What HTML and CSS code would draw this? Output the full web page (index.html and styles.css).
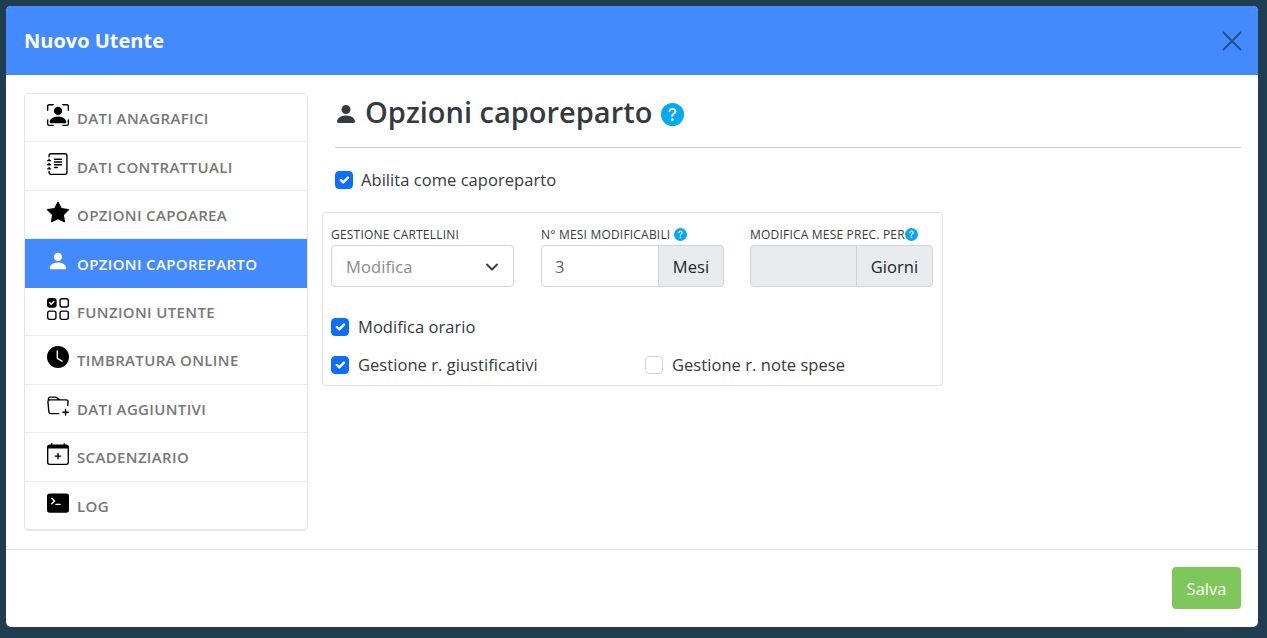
FILE: index.html
```html
<!DOCTYPE html>
<html lang="it">
<head>
<meta charset="utf-8">
<title>Nuovo Utente</title>
<link rel="stylesheet" href="styles.css">
</head>
<body>
<div class="modal">
  <header class="modal-header">
    <h1 class="modal-title">Nuovo Utente</h1>
    <button class="close" aria-label="Chiudi"><svg viewBox="0 0 20 20" width="20" height="20"><path d="M1 1 19 19M19 1 1 19"/></svg></button>
  </header>
  <div class="modal-body">
    <nav class="side">
      <a class="side-item"><svg class="ico" viewBox="0 0 16 16"><path d="M1.5 1a.5.5 0 0 0-.5.5v3a.5.5 0 0 1-1 0v-3A1.5 1.5 0 0 1 1.5 0h3a.5.5 0 0 1 0 1h-3zM11 .5a.5.5 0 0 1 .5-.5h3A1.5 1.5 0 0 1 16 1.5v3a.5.5 0 0 1-1 0v-3a.5.5 0 0 0-.5-.5h-3a.5.5 0 0 1-.5-.5zM.5 11a.5.5 0 0 1 .5.5v3a.5.5 0 0 0 .5.5h3a.5.5 0 0 1 0 1h-3A1.5 1.5 0 0 1 0 14.5v-3a.5.5 0 0 1 .5-.5zm15 0a.5.5 0 0 1 .5.5v3a1.5 1.5 0 0 1-1.5 1.5h-3a.5.5 0 0 1 0-1h3a.5.5 0 0 0 .5-.5v-3a.5.5 0 0 1 .5-.5z"/><path d="M3 14s-1 0-1-1 1-4 6-4 6 3 6 4-1 1-1 1H3zm8-9a3 3 0 1 1-6 0 3 3 0 0 1 6 0z"/></svg><span>DATI ANAGRAFICI</span></a>
      <a class="side-item"><svg class="ico" viewBox="0 0 16 16"><path d="M5 10.5a.5.5 0 0 1 .5-.5h2a.5.5 0 0 1 0 1h-2a.5.5 0 0 1-.5-.5zm0-2a.5.5 0 0 1 .5-.5h5a.5.5 0 0 1 0 1h-5a.5.5 0 0 1-.5-.5zm0-2a.5.5 0 0 1 .5-.5h5a.5.5 0 0 1 0 1h-5a.5.5 0 0 1-.5-.5zm0-2a.5.5 0 0 1 .5-.5h5a.5.5 0 0 1 0 1h-5a.5.5 0 0 1-.5-.5z"/><path d="M3 0h10a2 2 0 0 1 2 2v12a2 2 0 0 1-2 2H3a2 2 0 0 1-2-2v-1h1v1a1 1 0 0 0 1 1h10a1 1 0 0 0 1-1V2a1 1 0 0 0-1-1H3a1 1 0 0 0-1 1v1H1V2a2 2 0 0 1 2-2z"/><path d="M1 5v-.5a.5.5 0 0 1 1 0V5h.5a.5.5 0 0 1 0 1h-2a.5.5 0 0 1 0-1H1zm0 3v-.5a.5.5 0 0 1 1 0V8h.5a.5.5 0 0 1 0 1h-2a.5.5 0 0 1 0-1H1zm0 3v-.5a.5.5 0 0 1 1 0v.5h.5a.5.5 0 0 1 0 1h-2a.5.5 0 0 1 0-1H1z"/></svg><span>DATI CONTRATTUALI</span></a>
      <a class="side-item"><svg class="ico" viewBox="0 0 16 16"><path d="M3.612 15.443c-.386.198-.824-.149-.746-.592l.83-4.73L.173 6.765c-.329-.314-.158-.888.283-.95l4.898-.696L7.538.792c.197-.39.73-.39.927 0l2.184 4.327 4.898.696c.441.062.612.636.282.95l-3.522 3.356.83 4.73c.078.443-.36.79-.746.592L8 13.187l-4.389 2.256z"/></svg><span>OPZIONI CAPOAREA</span></a>
      <a class="side-item active"><svg class="ico" viewBox="0 0 16 16"><path d="M3 14s-1 0-1-1 1-4 6-4 6 3 6 4-1 1-1 1H3zm5-6a3 3 0 1 0 0-6 3 3 0 0 0 0 6z"/></svg><span>OPZIONI CAPOREPARTO</span></a>
      <a class="side-item"><svg class="ico" viewBox="0 0 16 16"><path d="M2 10h3a1 1 0 0 1 1 1v3a1 1 0 0 1-1 1H2a1 1 0 0 1-1-1v-3a1 1 0 0 1 1-1zm9-9h3a1 1 0 0 1 1 1v3a1 1 0 0 1-1 1h-3a1 1 0 0 1-1-1V2a1 1 0 0 1 1-1zm0 9a1 1 0 0 0-1 1v3a1 1 0 0 0 1 1h3a1 1 0 0 0 1-1v-3a1 1 0 0 0-1-1h-3zm0-10a2 2 0 0 0-2 2v3a2 2 0 0 0 2 2h3a2 2 0 0 0 2-2V2a2 2 0 0 0-2-2h-3zM2 9a2 2 0 0 0-2 2v3a2 2 0 0 0 2 2h3a2 2 0 0 0 2-2v-3a2 2 0 0 0-2-2H2zm7 2a2 2 0 0 1 2-2h3a2 2 0 0 1 2 2v3a2 2 0 0 1-2 2h-3a2 2 0 0 1-2-2v-3zM0 2a2 2 0 0 1 2-2h3a2 2 0 0 1 2 2v3a2 2 0 0 1-2 2H2a2 2 0 0 1-2-2V2zm5.354.854a.5.5 0 1 0-.708-.708L3 3.793l-.646-.647a.5.5 0 1 0-.708.708l1 1a.5.5 0 0 0 .708 0l2-2z"/></svg><span>FUNZIONI UTENTE</span></a>
      <a class="side-item"><svg class="ico" viewBox="0 0 16 16"><path d="M16 8A8 8 0 1 1 0 8a8 8 0 0 1 16 0zM8 3.5a.5.5 0 0 0-1 0V9a.5.5 0 0 0 .252.434l3.5 2a.5.5 0 0 0 .496-.868L8 8.71V3.5z"/></svg><span>TIMBRATURA ONLINE</span></a>
      <a class="side-item"><svg class="ico" viewBox="0 0 16 16"><path d="m.5 3 .04.87a1.99 1.99 0 0 0-.342 1.311l.637 7A2 2 0 0 0 2.826 14H9v-1H2.826a1 1 0 0 1-.995-.91l-.637-7A1 1 0 0 1 2.19 4h11.62a1 1 0 0 1 .996 1.09L14.54 8h1.005l.256-2.819A2 2 0 0 0 13.81 3H9.828a2 2 0 0 1-1.414-.586l-.828-.828A2 2 0 0 0 6.172 1H2.5a2 2 0 0 0-2 2zm5.672-1a1 1 0 0 1 .707.293L7.586 3H2.19c-.24 0-.47.042-.683.12L1.5 2.98a1 1 0 0 1 1-.98h3.672z"/><path d="M13.5 10a.5.5 0 0 1 .5.5V12h1.5a.5.5 0 1 1 0 1H14v1.5a.5.5 0 1 1-1 0V13h-1.5a.5.5 0 0 1 0-1H13v-1.5a.5.5 0 0 1 .5-.5z"/></svg><span>DATI AGGIUNTIVI</span></a>
      <a class="side-item"><svg class="ico" viewBox="0 0 16 16"><path d="M8 7a.5.5 0 0 1 .5.5V9H10a.5.5 0 0 1 0 1H8.5v1.5a.5.5 0 0 1-1 0V10H6a.5.5 0 0 1 0-1h1.5V7.5A.5.5 0 0 1 8 7z"/><path d="M3.5 0a.5.5 0 0 1 .5.5V1h8V.5a.5.5 0 0 1 1 0V1h1a2 2 0 0 1 2 2v11a2 2 0 0 1-2 2H2a2 2 0 0 1-2-2V3a2 2 0 0 1 2-2h1V.5a.5.5 0 0 1 .5-.5zM1 4v10a1 1 0 0 0 1 1h12a1 1 0 0 0 1-1V4H1z"/></svg><span>SCADENZIARIO</span></a>
      <a class="side-item"><svg class="ico" viewBox="0 0 16 16"><path d="M0 3a2 2 0 0 1 2-2h12a2 2 0 0 1 2 2v10a2 2 0 0 1-2 2H2a2 2 0 0 1-2-2V3zm9.5 5.5h-3a.5.5 0 0 0 0 1h3a.5.5 0 0 0 0-1zm-6.354-.354a.5.5 0 1 0 .708.708l2-2a.5.5 0 0 0 0-.708l-2-2a.5.5 0 1 0-.708.708L4.793 6.5 3.146 8.146z"/></svg><span>LOG</span></a>
    </nav>
    <main class="content">
      <div class="head">
        <h2 class="head-title"><svg class="head-ico" viewBox="0 0 16 16"><path d="M3 14s-1 0-1-1 1-4 6-4 6 3 6 4-1 1-1 1H3zm5-6a3 3 0 1 0 0-6 3 3 0 0 0 0 6z"/></svg><span>Opzioni caporeparto</span><svg class="help help-lg" viewBox="0 0 16 16"><path d="M16 8A8 8 0 1 1 0 8a8 8 0 0 1 16 0zM5.496 6.033h.825c.138 0 .248-.113.266-.25.09-.656.54-1.134 1.342-1.134.686 0 1.314.343 1.314 1.168 0 .635-.374.927-.965 1.371-.673.489-1.206 1.06-1.168 1.987l.003.217a.25.25 0 0 0 .25.246h.811a.25.25 0 0 0 .25-.25v-.105c0-.718.273-.927 1.01-1.486.609-.463 1.244-.977 1.244-2.056 0-1.511-1.276-2.241-2.673-2.241-1.267 0-2.655.59-2.75 2.286a.237.237 0 0 0 .241.247zm2.325 6.443c.61 0 1.029-.394 1.029-.927 0-.552-.42-.94-1.029-.94-.584 0-1.009.388-1.009.94 0 .533.425.927 1.01.927z"/></svg></h2>
      </div>
      <label class="check top-check"><span class="box on"><svg viewBox="0 0 20 20"><path d="m6 10 3 3 6-6"/></svg></span>Abilita come caporeparto</label>
      <section class="panel">
        <div class="fields">
          <div class="field f1">
            <div class="lbl">GESTIONE CARTELLINI</div>
            <div class="select"><span>Modifica</span><svg viewBox="0 0 16 16" width="16" height="16"><path d="m3 5.5 5 5 5-5"/></svg></div>
          </div>
          <div class="field f2">
            <div class="lbl">N° MESI MODIFICABILI <svg class="help" viewBox="0 0 16 16"><path d="M16 8A8 8 0 1 1 0 8a8 8 0 0 1 16 0zM5.496 6.033h.825c.138 0 .248-.113.266-.25.09-.656.54-1.134 1.342-1.134.686 0 1.314.343 1.314 1.168 0 .635-.374.927-.965 1.371-.673.489-1.206 1.06-1.168 1.987l.003.217a.25.25 0 0 0 .25.246h.811a.25.25 0 0 0 .25-.25v-.105c0-.718.273-.927 1.01-1.486.609-.463 1.244-.977 1.244-2.056 0-1.511-1.276-2.241-2.673-2.241-1.267 0-2.655.59-2.75 2.286a.237.237 0 0 0 .241.247zm2.325 6.443c.61 0 1.029-.394 1.029-.927 0-.552-.42-.94-1.029-.94-.584 0-1.009.388-1.009.94 0 .533.425.927 1.01.927z"/></svg></div>
            <div class="group"><div class="input">3</div><div class="addon">Mesi</div></div>
          </div>
          <div class="field f3">
            <div class="lbl">MODIFICA MESE PREC. PER<svg class="help" viewBox="0 0 16 16"><path d="M16 8A8 8 0 1 1 0 8a8 8 0 0 1 16 0zM5.496 6.033h.825c.138 0 .248-.113.266-.25.09-.656.54-1.134 1.342-1.134.686 0 1.314.343 1.314 1.168 0 .635-.374.927-.965 1.371-.673.489-1.206 1.06-1.168 1.987l.003.217a.25.25 0 0 0 .25.246h.811a.25.25 0 0 0 .25-.25v-.105c0-.718.273-.927 1.01-1.486.609-.463 1.244-.977 1.244-2.056 0-1.511-1.276-2.241-2.673-2.241-1.267 0-2.655.59-2.75 2.286a.237.237 0 0 0 .241.247zm2.325 6.443c.61 0 1.029-.394 1.029-.927 0-.552-.42-.94-1.029-.94-.584 0-1.009.388-1.009.94 0 .533.425.927 1.01.927z"/></svg></div>
            <div class="group"><div class="input disabled"></div><div class="addon">Giorni</div></div>
          </div>
        </div>
        <label class="check row-a"><span class="box on"><svg viewBox="0 0 20 20"><path d="m6 10 3 3 6-6"/></svg></span>Modifica orario</label>
        <div class="row-b">
          <label class="check col-a"><span class="box on"><svg viewBox="0 0 20 20"><path d="m6 10 3 3 6-6"/></svg></span>Gestione r. giustificativi</label>
          <label class="check"><span class="box"></span>Gestione r. note spese</label>
        </div>
      </section>
    </main>
  </div>
  <footer class="modal-footer"><button class="save">Salva</button></footer>
</div>
</body>
</html>
```
FILE: styles.css
```css
* { box-sizing: border-box; }
html, body { height: 100%; }
body {
  margin: 0;
  padding: 6px 9px 11px 6px;
  background: #1f3c50;
  font-family: "Open Sans", "Noto Sans", sans-serif;
  color: #343a40;
  overflow: hidden;
}
.modal {
  height: 621px;
  display: flex;
  flex-direction: column;
  background: #fff;
  border-radius: 5px;
  overflow: hidden;
}
.modal-header {
  height: 69px;
  flex: none;
  background: #448aff;
  display: flex;
  align-items: center;
  justify-content: space-between;
  padding: 0 16px 0 18px;
}
.modal-title {
  margin: 0;
  font-size: 20px;
  font-weight: 700;
  color: #fff;
}
.close {
  border: 0;
  background: none;
  padding: 0;
  display: flex;
  width: 20px;
  height: 20px;
}
.close svg { stroke: #24508f; stroke-width: 2; fill: none; }
.modal-body {
  flex: 1;
  display: flex;
  padding: 18px 17px 18px 18px;
}
.side {
  width: 284px;
  height: 438px;
  flex: none;
  border: 1px solid #e4e7ea;
  border-bottom-width: 2px;
  border-radius: 5px;
  overflow: hidden;
  display: flex;
  flex-direction: column;
}
.side-item {
  height: 48.45px;
  flex: none;
  display: flex;
  align-items: center;
  padding-left: 22px;
  gap: 8px;
  font-size: 15px;
  font-weight: 600;
  letter-spacing: .35px;
  color: #777;
  border-bottom: 1px solid #e9ecef;
}
.side-item:last-child { border-bottom: 0; }
.side-item span { padding-top: 1px; }
.ico { width: 22px; height: 22px; fill: #000; flex: none; margin-top: -5px; }
.side-item.active { background: #448aff; color: #fff; border-bottom: 0; }
.side-item.active span { padding-top: 0; }
.side-item.active .ico { fill: #fff; }
.content { flex: 1; min-width: 0; padding-left: 14px; }
.head {
  margin-left: 13px;
  height: 55px;
  border-bottom: 1px solid #c9c9c9;
}
.head-title {
  margin: 0;
  display: flex;
  align-items: center;
  font-size: 29px;
  font-weight: 600;
  line-height: 38px;
  color: #343a40;
}
.head-ico { width: 24px; height: 24px; fill: #343a40; margin: 4px 7px 0 -1px; }
.help { fill: #03a9f4; width: 13px; height: 13px; vertical-align: -2px; }
.help-lg { width: 23px; height: 23px; margin: 5px 0 0 9px; }
.check {
  display: flex;
  align-items: center;
  font-size: 16.5px;
  letter-spacing: .05px;
  color: #343a40;
  line-height: 24px;
}
.box {
  width: 18px;
  height: 18px;
  border: 1px solid #ced4da;
  border-radius: 4px;
  margin-right: 9px;
  background: #fff;
  flex: none;
}
.box svg { display: block; width: 100%; height: 100%; fill: none; stroke: #fff; stroke-width: 3; stroke-linecap: round; stroke-linejoin: round; }
.box.on { background: #0d6efd; border-color: #0d6efd; }
.top-check { margin: 20px 0 0 13px; }
.top-check .box { margin-right: 8px; }
.panel {
  margin-top: 20px;
  width: 621px;
  height: 174px;
  border: 1px solid #e0e0e0;
  border-radius: 4px;
  padding: 12px 9px 0 8px;
}
.fields { display: flex; }
.f1 { width: 183px; margin-right: 27px; }
.f2 { width: 183px; margin-right: 26px; }
.f3 { width: 183px; }
.lbl {
  font-size: 12px;
  font-weight: 500;
  letter-spacing: .2px;
  color: #343a40;
  line-height: 20px;
  white-space: nowrap;
  height: 20px;
}
.select, .input, .addon {
  height: 42px;
  border: 1px solid #ced4da;
  font-size: 16.5px;
  letter-spacing: .1px;
  display: flex;
  align-items: center;
  padding-top: 1px;
}
.select {
  border-radius: 4px;
  padding: 1px 13px 0 14px;
  justify-content: space-between;
  color: #8a8a8a;
}
.select svg { fill: none; stroke: #343a40; stroke-width: 1.8; stroke-linecap: round; stroke-linejoin: round; }
.group { display: flex; }
.input {
  flex: 1;
  padding-left: 13px;
  border-radius: 4px 0 0 4px;
  color: #5f6870;
}
.input.disabled { background: #e9ecef; }
.addon {
  margin-left: -1px;
  width: 66px;
  flex: none;
  justify-content: center;
  background: #e9ecef;
  color: #212529;
  border-radius: 0 4px 4px 0;
}
.f3 .addon { width: 77px; }
.row-a { margin-top: 28px; }
.row-b { display: flex; margin-top: 14px; }
.col-a { width: 314px; }
.modal-footer {
  flex: none;
  height: 78px;
  border-top: 1px solid #e0e0e0;
  display: flex;
  justify-content: flex-end;
  align-items: flex-start;
  padding: 17px 17px 0 0;
}
.save {
  width: 69px;
  height: 42px;
  border: 0;
  border-radius: 4px;
  background: #7ec85b;
  color: #fff;
  font: 16.5px "Open Sans", sans-serif;
}
```
